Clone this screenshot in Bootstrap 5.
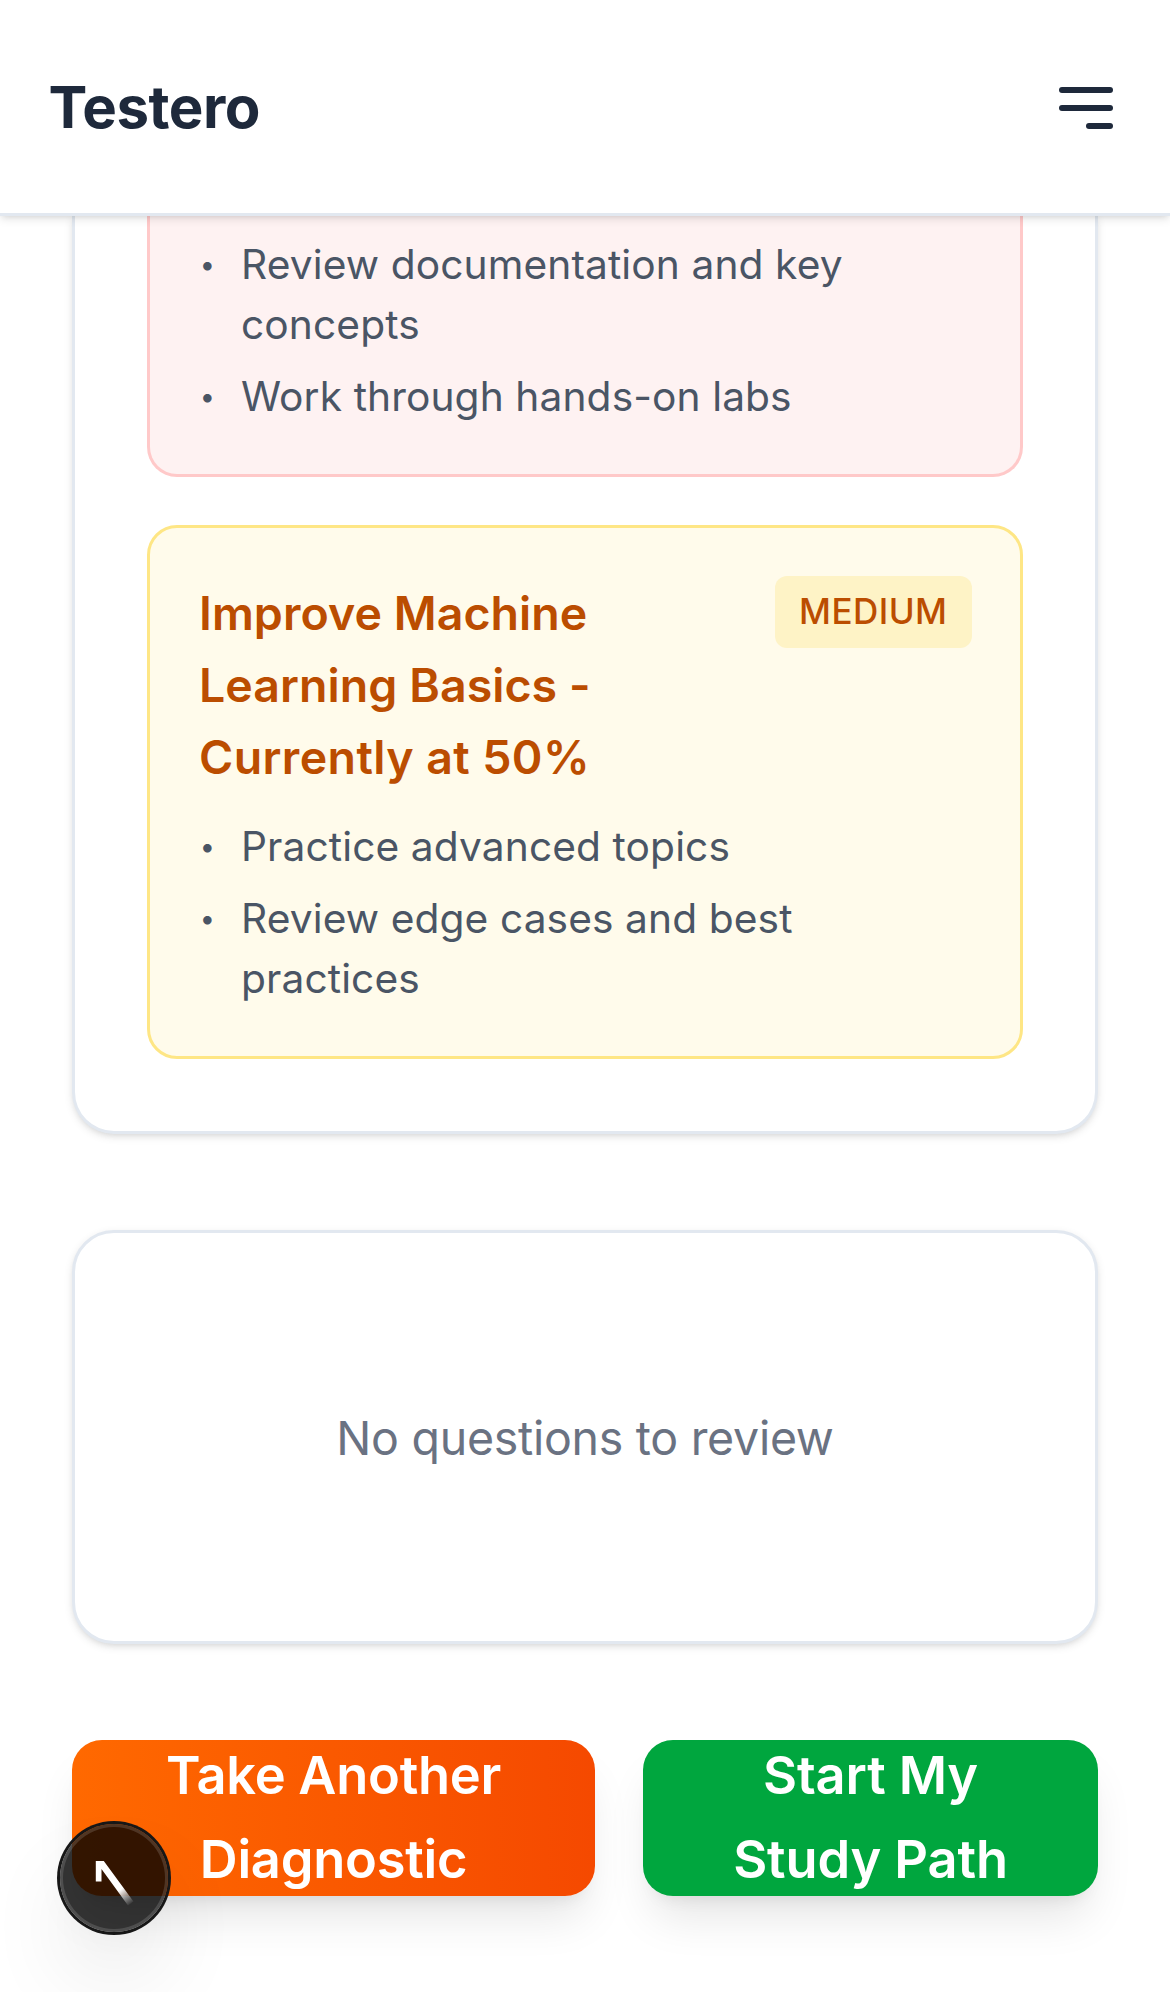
<!DOCTYPE html>
<html lang="en">
<head>
<meta charset="utf-8">
<meta name="viewport" content="width=device-width, initial-scale=1">
<title>Testero</title>
<link href="https://cdn.jsdelivr.net/npm/bootstrap@5.3.0/dist/css/bootstrap.min.css" rel="stylesheet">
<style>
  body { font-family: Inter, "Liberation Sans", sans-serif; background: #fff; height: 1992px; overflow: hidden; }
  .site-header { height: 216px; padding: 0 57px 0 48.5px; border-bottom: 3px solid #e2e8f0; z-index: 10;
    box-shadow: 0 3px 9px rgba(0,0,0,.1), 0 3px 6px -3px rgba(0,0,0,.1); }
  .brand { font-size: 58.2px; font-weight: 700; letter-spacing: -.49px; color: #1e293b; line-height: 84px; }
  .menu-btn { margin-top: 3px; }
  .page { padding: 0 72px; gap: 96px; }
  .panel { border: 3px solid #e2e8f0; border-radius: 42px; background: #fff;
    box-shadow: 0 3px 9px rgba(0,0,0,.1), 0 3px 6px -3px rgba(0,0,0,.1); }
  .panel-plan { border-top: 0; border-radius: 0 0 42px 42px; padding: 0 72px 72px; gap: 48px; }
  .panel-empty { height: 414px; padding-top: 4px; color: #6a7282; font-size: 46.5px; letter-spacing: -.28px; }
  .tip { border: 3px solid; border-radius: 30px; padding: 49px 48px 47px; }
  .tip-high { background: #fef2f2; border-color: #ffc9c9; border-top: 0; border-radius: 0 0 30px 30px; padding-top: 19px; }
  .tip-medium { background: #fffbeb; border-color: #fee685; }
  .tip h3 { font-size: 46.5px; font-weight: 600; line-height: 72px; letter-spacing: .05px; color: #bb4d00; padding-left: 1px; }
  .score-line { letter-spacing: .4px; }
  .tip-head { margin-bottom: 24px; gap: 24px; }
  .level { background: #fef3c6; color: #bb4d00; font-size: 35px; font-weight: 500; letter-spacing: .45px;
    line-height: 48px; padding: 11px 23px 13px 24px; border-radius: 12px; width: 197px; margin-top: -1px; white-space: nowrap; }
  .steps { gap: 12px; font-size: 40.7px; line-height: 60px; letter-spacing: .1px; color: #4a5565; }
  .steps li { gap: 24px; }
  .dot { width: 19px; flex: none; font-size: 27px; line-height: 60px; height: 60px; text-align: center; }
  .cta { height: 156px; border: 0; border-radius: 30px; color: #fff; font-size: 52.4px; font-weight: 600; line-height: 84px;
    letter-spacing: -.12px; padding: 0; box-shadow: 0 30px 45px -9px rgba(0,0,0,.1), 0 12px 18px -12px rgba(0,0,0,.1); }
  .cta-retake { width: 523px; background: linear-gradient(90deg, #ff6900, #f54900); letter-spacing: -.25px; }
  .cta-start { width: 455px; background: #00a63e; }
  .cta span { margin-top: -2px; }
  .dev-badge { left: 60px; bottom: 60px; width: 108px; height: 108px; border-radius: 50%; background: rgba(0,0,0,.8);
    box-shadow: 0 0 0 3px #171717, inset 0 0 0 3px rgba(255,255,255,.14), 0 48px 96px -24px rgba(0,0,0,.24); z-index: 20; }
</style>
<script src="https://cdn.jsdelivr.net/npm/bootstrap@5.3.0/dist/js/bootstrap.bundle.min.js"></script>
</head>
<body class="position-relative">
<header class="site-header bg-white position-relative d-flex align-items-center justify-content-between">
  <a class="brand text-decoration-none" href="#">Testero</a>
  <button class="menu-btn btn p-0 border-0 d-flex" type="button" aria-label="Open menu">
    <svg width="54" height="42" viewBox="0 0 54 42" fill="#1e293b"><rect width="54" height="6" rx="3"/><rect y="18" width="54" height="6" rx="3"/><rect x="27" y="36" width="27" height="6" rx="3"/></svg>
  </button>
</header>
<main class="page d-flex flex-column">
  <section class="panel panel-plan d-flex flex-column">
    <div class="tip tip-high">
      <ul class="steps list-unstyled d-flex flex-column mb-0">
        <li class="d-flex"><span class="dot">•</span><span>Review documentation and key<br>concepts</span></li>
        <li class="d-flex"><span class="dot">•</span><span>Work through hands-on labs</span></li>
      </ul>
    </div>
    <div class="tip tip-medium">
      <div class="tip-head d-flex justify-content-between align-items-start">
        <h3 class="mb-0">Improve Machine<br>Learning Basics -<br><span class="score-line">Currently at 50%</span></h3>
        <span class="level flex-shrink-0">MEDIUM</span>
      </div>
      <ul class="steps list-unstyled d-flex flex-column mb-0">
        <li class="d-flex"><span class="dot">•</span><span>Practice advanced topics</span></li>
        <li class="d-flex"><span class="dot">•</span><span>Review edge cases and best<br>practices</span></li>
      </ul>
    </div>
  </section>
  <section class="panel panel-empty d-flex align-items-center justify-content-center">
    <p class="mb-0">No questions to review</p>
  </section>
  <div class="d-flex justify-content-between">
    <button class="cta cta-retake btn d-flex align-items-center justify-content-center" type="button"><span>Take Another<br>Diagnostic</span></button>
    <button class="cta cta-start btn d-flex align-items-center justify-content-center" type="button"><span>Start My<br>Study Path</span></button>
  </div>
</main>
<div class="dev-badge position-absolute">
  <svg class="d-block" width="108" height="108" viewBox="0 0 108 108">
    <defs><linearGradient id="fade" gradientUnits="userSpaceOnUse" x1="56" y1="59" x2="72" y2="80"><stop offset="0" stop-color="#fff"/><stop offset=".3" stop-color="#fff"/><stop offset="1" stop-color="#fff" stop-opacity="0"/></linearGradient></defs>
    <path d="M35.8 37H43.8L73.5 77.5L68 81.5L41.5 45V57.6H35.8Z" fill="url(#fade)"/>
  </svg>
</div>
</body>
</html>
